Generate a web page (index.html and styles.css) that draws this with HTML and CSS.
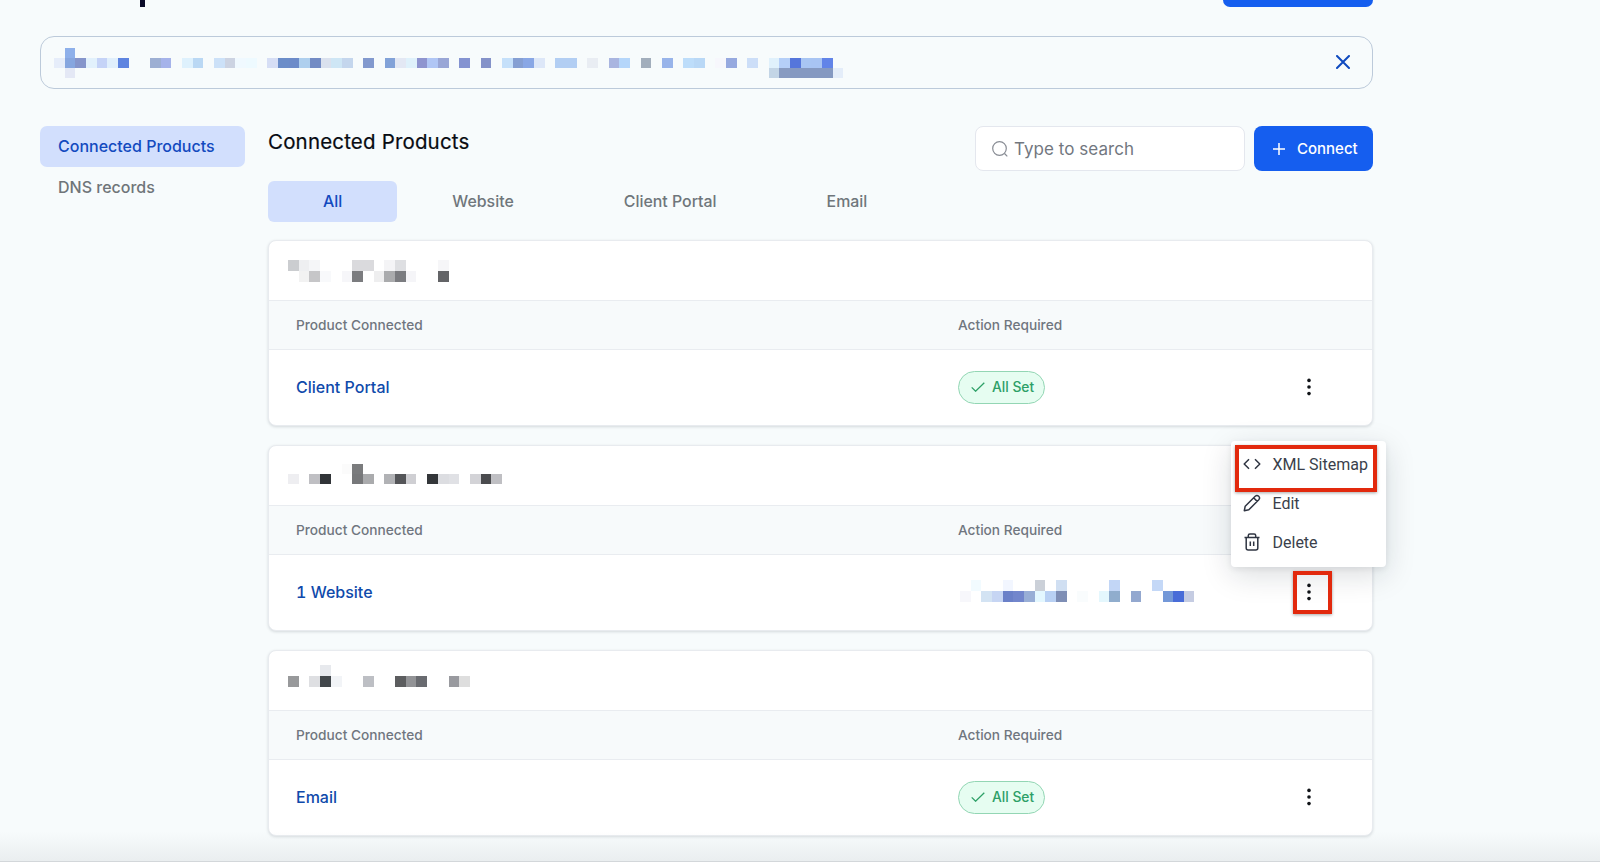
FILE: index.html
```
<!DOCTYPE html>
<html lang="en">
<head>
  <meta charset="UTF-8">
  <meta name="viewport" content="width=device-width, initial-scale=1.0">
  <title>Connected Products</title>
  <link rel="stylesheet" href="styles.css">
</head>
<body>
  <div class="page">
    <header class="topbar">
      <div class="title-stem"></div>
      <div class="top-button"></div>
    </header>

    <div class="notice">
      <svg class="mosaic mosaic-notice" data-mosaic="notice" viewBox="0 0 74 3" preserveAspectRatio="none"></svg>
      <svg class="close" viewBox="0 0 14 14"><path d="M1 1L13 13M13 1L1 13"/></svg>
    </div>

    <div class="columns">
      <nav class="sidebar">
        <a class="active">Connected Products</a>
        <a>DNS records</a>
      </nav>

      <main>
        <div class="head">
          <h1>Connected Products</h1>
          <div class="tools">
            <div class="search">
              <svg viewBox="0 0 16 16"><circle cx="7.5" cy="7.5" r="6.8"/><path d="M12.5 12.5L15.3 15.3"/></svg>
              <span>Type to search</span>
            </div>
            <button class="connect">
              <svg viewBox="0 0 12 12"><path d="M6 0V12M0 6H12"/></svg>
              <span>Connect</span>
            </button>
          </div>
        </div>

        <div class="tabs">
          <a class="active">All</a>
          <a>Website</a>
          <a>Client Portal</a>
          <a>Email</a>
        </div>

        <section class="card">
          <div class="card-title">
            <svg class="mosaic mosaic-first" data-mosaic="first" viewBox="0 0 20 2" preserveAspectRatio="none"></svg>
          </div>
          <div class="row labels"><span>Product Connected</span><span>Action Required</span></div>
          <div class="row item">
            <a>Client Portal</a>
            <div><span class="badge"><svg viewBox="0 0 14 10"><path d="M.7 5.4L4.6 9.2L13.3.8"/></svg>All Set</span></div>
            <svg class="dots" viewBox="0 0 4 18"><circle cx="2" cy="2.4" r="1.8"/><circle cx="2" cy="9" r="1.8"/><circle cx="2" cy="15.6" r="1.8"/></svg>
          </div>
        </section>

        <section class="card">
          <div class="card-title">
            <svg class="mosaic mosaic-second" data-mosaic="second" viewBox="0 0 20 2" preserveAspectRatio="none"></svg>
          </div>
          <div class="row labels"><span>Product Connected</span><span>Action Required</span></div>
          <div class="row item">
            <a>1 Website</a>
            <div><svg class="mosaic mosaic-action" data-mosaic="action" viewBox="0 0 22 2" preserveAspectRatio="none"></svg></div>
            <svg class="dots" viewBox="0 0 4 18"><circle cx="2" cy="2.4" r="1.8"/><circle cx="2" cy="9" r="1.8"/><circle cx="2" cy="15.6" r="1.8"/></svg>
          </div>

          <div class="menu">
            <div class="menu-item">
              <svg viewBox="0 0 18 18"><path d="M6 4.2L1.2 9L6 13.8M12 4.2L16.8 9L12 13.8"/></svg>
              <span>XML Sitemap</span>
            </div>
            <div class="menu-item">
              <svg viewBox="0 0 18 18"><path d="M1.3 16.7L2.2 12.2L12.2 2.2Q14 .6 15.7 2.3Q17.4 4 15.8 5.8L5.8 15.8ZM10.6 3.8L14.2 7.4"/></svg>
              <span>Edit</span>
            </div>
            <div class="menu-item">
              <svg viewBox="0 0 18 18"><path d="M1.5 4.5H16.5M5.3 4.5V2.6Q5.3 1 6.9 1H11.1Q12.7 1 12.7 2.6V4.5M3.2 4.5V15Q3.2 17 5.2 17H12.8Q14.8 17 14.8 15V4.5M7.3 8.5V13M10.7 8.5V13"/></svg>
              <span>Delete</span>
            </div>
          </div>
          <div class="mark mark-sitemap"></div>
          <div class="mark mark-dots"></div>
        </section>

        <section class="card">
          <div class="card-title">
            <svg class="mosaic mosaic-third" data-mosaic="third" viewBox="0 0 20 2" preserveAspectRatio="none"></svg>
          </div>
          <div class="row labels"><span>Product Connected</span><span>Action Required</span></div>
          <div class="row item">
            <a>Email</a>
            <div><span class="badge"><svg viewBox="0 0 14 10"><path d="M.7 5.4L4.6 9.2L13.3.8"/></svg>All Set</span></div>
            <svg class="dots" viewBox="0 0 4 18"><circle cx="2" cy="2.4" r="1.8"/><circle cx="2" cy="9" r="1.8"/><circle cx="2" cy="15.6" r="1.8"/></svg>
          </div>
        </section>
      </main>
    </div>
    <div class="fade"></div>
  </div>

  <script>
    // Each list is one row of blocks: column, colour
    const mosaics = {
      notice: [
        [1, '#8eb0ea'],
        [0, '#e6edfa', 1, '#86a6df', 2, '#8595cb', 3, '#e2f1fc', 4, '#c5d3f7', 5, '#e0effc', 6, '#5e84e0',
         9, '#9dafd3', 10, '#a5b3ea', 12, '#def1fd', 13, '#bad8f4', 15, '#cce1f8', 16, '#ccd3e2', 17, '#f0f9ff', 18, '#eefaff',
         20, '#d6def5', 21, '#6b8dc9', 22, '#6c8bc9', 23, '#aecfee', 24, '#728bc4', 25, '#dae1ee', 26, '#cee6f5', 27, '#c4d6ed',
         29, '#8299ce', 31, '#82a2d8', 32, '#e3e8f4', 33, '#dff1fb', 34, '#8e94cf', 35, '#b0c6f5', 36, '#99a6d6',
         38, '#8493d1', 40, '#8492c9', 42, '#c5e0fa', 43, '#859fd3', 44, '#89a7e5', 45, '#dde7f8', 47, '#b2cef3', 48, '#b2cef3',
         50, '#e9edf3', 52, '#a9b5e0', 53, '#b5d6fa', 55, '#a2aebc', 57, '#98b4ea', 59, '#bdddfa', 60, '#b9d8f6', 62, '#f7f7fc',
         63, '#96a9df', 65, '#ccdef8', 67, '#e0f1fc', 68, '#b5cff8', 69, '#5576db', 70, '#a8c5f3', 71, '#a8c4f3', 72, '#6284e8'],
        [1, '#e4e8f5', 67, '#c3d5e6', 68, '#889bc1', 69, '#8599c1', 70, '#8599c1', 71, '#8599c1', 72, '#8599c1', 73, '#e4edf9']
      ],
      first: [
        [0, '#cbcdd0', 1, '#eeeff1', 2, '#f5f6f8', 6, '#dadadd', 7, '#dadadd', 9, '#f4f4f6', 10, '#dedfe2', 14, '#f6f6f8'],
        [1, '#f2f2f2', 2, '#c6c6c8', 3, '#f8f9fb', 5, '#f6f6f9', 6, '#7b7c7f', 8, '#eeeeef', 9, '#aaabad', 10, '#7b7c80', 11, '#f5f5f8', 14, '#636467']
      ],
      second: [
        [5, '#fbfbfb', 6, '#7a7b7d'],
        [0, '#eeeef1', 2, '#bfbfc3', 3, '#313438', 6, '#77787a', 7, '#aaabad', 9, '#b1b2b5', 10, '#545558', 11, '#cfcfd3',
         13, '#333639', 14, '#dcdde1', 15, '#e0e1e5', 17, '#d3d3d7', 18, '#4a4b4e', 19, '#bfbfc3']
      ],
      action: [
        [1, '#f2fbff', 4, '#f2f6ff', 7, '#cbd0d8', 9, '#d0dff2', 14, '#c2d6f6', 18, '#c4d8f7'],
        [0, '#f7f7fb', 2, '#d3e3f3', 3, '#c6d5f3', 4, '#6a80c8', 5, '#7286cc', 6, '#98aed6', 7, '#e3f7ff', 8, '#b8d0f3', 9, '#7e8eb5',
         11, '#f9fcfd', 13, '#e4f7fd', 14, '#90adcd', 16, '#93a8cf', 19, '#7398d8', 20, '#486cd8', 21, '#c5cce2']
      ],
      third: [
        [3, '#e7e9ed'],
        [0, '#98999b', 2, '#dedfe2', 3, '#42474b', 4, '#f2f4f7', 7, '#bdbfc4', 10, '#5c5d5f', 11, '#929396', 12, '#696b70', 15, '#999a9f', 16, '#dedede']
      ]
    };

    document.querySelectorAll('[data-mosaic]').forEach(svg => {
      mosaics[svg.dataset.mosaic].forEach((row, y) => {
        for (let i = 0; i < row.length; i += 2) {
          const rect = document.createElementNS('http://www.w3.org/2000/svg', 'rect');
          rect.setAttribute('x', row[i]);
          rect.setAttribute('y', y);
          rect.setAttribute('width', 1);
          rect.setAttribute('height', 1);
          rect.setAttribute('fill', row[i + 1]);
          svg.appendChild(rect);
        }
      });
    });
  </script>
</body>
</html>
```
FILE: styles.css
```
* {
  box-sizing: border-box;
}
body {
  margin: 0;
  background: #f7fbfc;
  font-family: Inter, sans-serif;
  color: #080b12;
}
svg {
  display: block;
  flex: none;
  fill: none;
}
.page {
  position: relative;
  height: 862px;
  padding-left: 39.5px;
  overflow: hidden;
}
.topbar {
  display: flex;
  justify-content: space-between;
  width: 1333.5px;
  height: 36px;
  padding-left: 100.5px;
}
.title-stem {
  width: 5px;
  height: 7px;
  background: #0a0a28;
}
.top-button {
  width: 150px;
  height: 7px;
  background: #155eef;
  border-radius: 0 0 8px 8px;
}
.notice {
  display: flex;
  justify-content: space-between;
  width: 1333.5px;
  height: 53px;
  padding: 11px 22.5px 0 13.4px;
  border: 1px solid #bccada;
  border-radius: 14px;
}
.mosaic {
  shape-rendering: crispEdges;
}
.mosaic-notice {
  width: 789.3px;
  height: 30px;
}
.close {
  width: 14px;
  height: 14px;
  margin-top: 7px;
  stroke: #0f4abf;
  stroke-width: 2;
  stroke-linecap: round;
}
.columns {
  display: flex;
  gap: 23px;
  padding-top: 37px;
}
.sidebar {
  width: 205.5px;
}
.sidebar a {
  display: block;
  height: 41px;
  padding-left: 18.5px;
  border-radius: 7px;
  font-size: 16px;
  line-height: 40px;
  color: #6f7579;
  font-weight: 500;
}
.sidebar .active, .tabs .active {
  background: #d2dffd;
  color: #134abf;
}
main {
  width: 1105px;
}
.head {
  display: flex;
  justify-content: space-between;
  height: 54.5px;
}
h1 {
  margin: 0;
  font-size: 20.5px;
  line-height: 31px;
  font-weight: 400;
  letter-spacing: 0.17px;
  -webkit-text-stroke: 0.2px #080b12;
}
.tools {
  display: flex;
  gap: 9px;
  height: 45px;
}
.search {
  display: flex;
  align-items: center;
  gap: 6px;
  width: 270.5px;
  padding-left: 16.5px;
  background: #fff;
  border: 1px solid #e4e7ee;
  border-radius: 8px;
  font-size: 17px;
  letter-spacing: 0.05px;
  color: #72777f;
}
.search svg {
  width: 16px;
  height: 16px;
  stroke: #888c94;
  stroke-width: 1.2;
}
.connect {
  display: flex;
  align-items: center;
  gap: 12px;
  width: 119px;
  padding: 0 0 0 19px;
  background: #155eef;
  border: none;
  border-radius: 8px;
  font: 500 15px Inter, sans-serif;
  color: #fff;
}
.connect svg {
  width: 12px;
  height: 12px;
  stroke: #fff;
  stroke-width: 1.5;
}
.tabs {
  display: flex;
  height: 41px;
  margin-bottom: 18px;
}
.tabs a {
  padding: 0 55px;
  border-radius: 6px;
  font-size: 15.9px;
  line-height: 41px;
  font-weight: 500;
  color: #6f767b;
}
.card {
  position: relative;
  height: 186px;
  margin-bottom: 19px;
  background: #fff;
  border: 1px solid #e8ebef;
  border-radius: 8px;
  box-shadow: 0 1px 3px rgba(16, 24, 40, 0.15);
}
.card-title {
  height: 59px;
  padding: 19px 0 0 18.5px;
}
.mosaic-first, .mosaic-second, .mosaic-third {
  width: 214px;
  height: 22px;
}
.mosaic-second {
  height: 20px;
  margin-top: -1px;
}
.mosaic-third {
  margin-top: -5px;
}
.row {
  display: grid;
  grid-template-columns: 662px 349px 4px;
  align-items: center;
  padding-left: 27px;
}
.labels {
  height: 50px;
  background: #f7fafb;
  border-top: 1px solid #e9ecf0;
  border-bottom: 1px solid #e9ecf0;
  font-size: 13.7px;
  font-weight: 500;
  color: #70767f;
}
.item {
  height: 75px;
  font-size: 16px;
  font-weight: 500;
  font-variant-numeric: tabular-nums;
  color: #0f4aab;
}
.badge {
  display: inline-flex;
  align-items: center;
  gap: 7px;
  width: 87px;
  height: 33px;
  padding-left: 12px;
  background: #e6fdf1;
  border: 1px solid #93d6b4;
  border-radius: 17px;
  font-size: 13.8px;
  font-weight: 500;
  color: #2da067;
  vertical-align: middle;
}
.badge svg {
  width: 14px;
  height: 10px;
  stroke: #2da067;
  stroke-width: 1.3;
}
.mosaic-action {
  width: 234.7px;
  height: 22px;
  margin: -2px 0 0 1.5px;
}
.dots {
  width: 4px;
  height: 18px;
  fill: #111418;
}
.menu {
  position: absolute;
  z-index: 1;
  top: -5px;
  left: 962px;
  width: 154.5px;
  height: 126px;
  padding-top: 4px;
  background: #fff;
  border-radius: 4px;
  box-shadow: 0 8px 30px rgba(16, 24, 40, 0.15), 0 2px 6px rgba(16, 24, 40, 0.08);
}
.menu-item {
  display: flex;
  align-items: center;
  gap: 12px;
  height: 39px;
  padding-left: 11.5px;
  font: 16px Roboto, sans-serif;
  color: #3a3f4b;
}
.menu-item svg {
  width: 18px;
  height: 18px;
  stroke: #2f3542;
  stroke-width: 1.5;
  stroke-linejoin: round;
}
.mark {
  position: absolute;
  z-index: 2;
  border: 4px solid #e2290d;
  box-shadow: 0 1px 3px rgba(0, 0, 0, 0.35);
}
.mark-sitemap {
  top: -1px;
  left: 966px;
  width: 142px;
  height: 47px;
}
.mark-dots {
  top: 125px;
  left: 1024px;
  width: 39px;
  height: 43px;
}
.fade {
  position: absolute;
  left: 0;
  right: 0;
  bottom: 0;
  height: 30px;
  background: linear-gradient(rgba(225, 229, 231, 0), rgba(225, 229, 231, 0.6));
  border-bottom: 1px solid #d3d7da;
}
```
